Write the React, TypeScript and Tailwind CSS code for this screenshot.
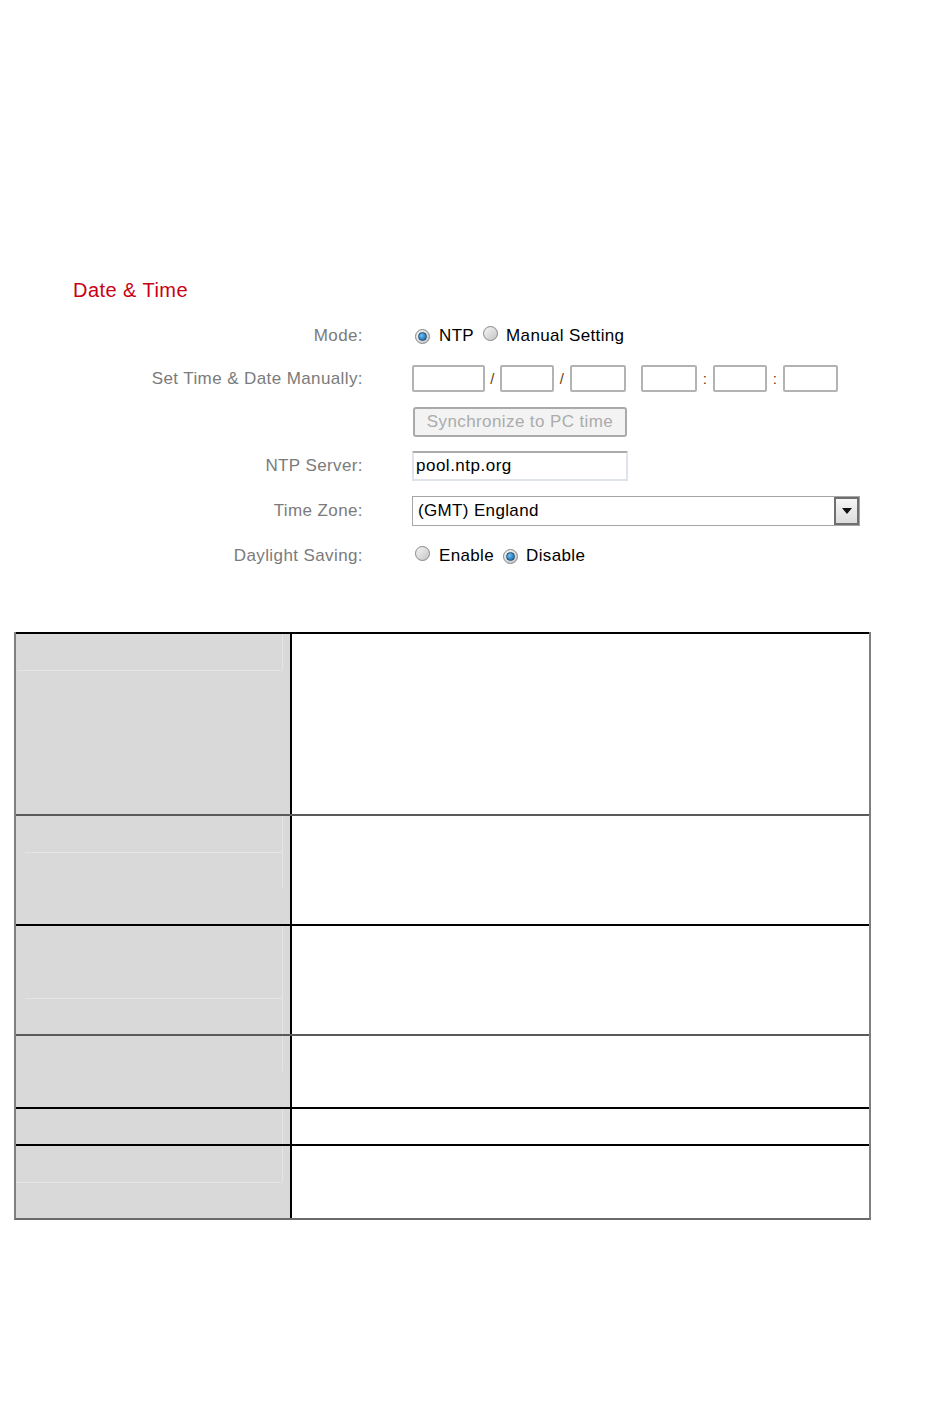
import React from 'react';

// ---------------------------------------------------------------------------
// Small form controls
// ---------------------------------------------------------------------------

function Radio({ checked }: { checked?: boolean }) {
  return (
    <span className="relative inline-flex h-[15px] w-[15px] shrink-0 items-center justify-center rounded-full border border-[#858585] bg-gradient-to-br from-[#f6f6f6] to-[#c4c4c4]">
      {checked && (
        <span className="h-[9px] w-[9px] rounded-full border border-[#1d4f7a] bg-[radial-gradient(circle_at_35%_35%,#6cc0f4,#0b5a9c)]" />
      )}
    </span>
  );
}

function Box({ w }: { w: string }) {
  return <span className={`${w} block h-[27px] rounded-[2px] border-2 border-[#b3b3b3] bg-white`} />;
}

function Sep({ ch, w }: { ch: string; w: string }) {
  return (
    <span className={`${w} block text-center text-[15px] leading-[27px] text-[#6b3a10]`}>{ch}</span>
  );
}

function Row({ label, h, children }: { label?: string; h: string; children: React.ReactNode }) {
  return (
    <div className={`flex items-center ${h}`}>
      <div className="w-[363px] shrink-0 text-right text-[17px] tracking-[0.4px] text-[#7b7b7b]">
        {label}
      </div>
      <div className="ml-[49px] flex items-center">{children}</div>
    </div>
  );
}

// ---------------------------------------------------------------------------
// Table rows with faint cell-edge lines in the grey column
// ---------------------------------------------------------------------------

interface TRow {
  h: string;
  top: string;
  vLine: string;
  hLine?: string;
}

const rows: TRow[] = [
  { h: 'h-[182px]', top: 'border-t-black', vLine: 'h-[36px]', hLine: 'top-[36px] left-[1px]' },
  { h: 'h-[110px]', top: 'border-t-[#5a5a5a]', vLine: 'h-[72px]', hLine: 'top-[36px] left-[9px]' },
  { h: 'h-[110px]', top: 'border-t-black', vLine: 'h-[108px]', hLine: 'top-[72px] left-[9px]' },
  { h: 'h-[73px]', top: 'border-t-[#5a5a5a]', vLine: 'h-[35px]' },
  { h: 'h-[37px]', top: 'border-t-black', vLine: 'h-[35px]' },
  { h: 'h-[74px]', top: 'border-t-black', vLine: 'h-[36px]', hLine: 'top-[36px] left-0' },
];

export default function App() {
  return (
    <div
      className="h-[1408px] w-[950px] bg-white pt-[278px]"
      style={{ fontFamily: '"Liberation Sans", Arial, sans-serif' }}
    >
      <div className="ml-[73px] text-[20px] leading-[24px] tracking-[0.45px] text-[#c80014]">
        Date &amp; Time
      </div>

      <div className="mt-[13px] tracking-[0.35px]">
        <Row label="Mode:" h="h-[42px]">
          <span className="ml-[3px]">
            <Radio checked />
          </span>
          <span className="ml-[9px] text-[17px] text-black">NTP</span>
          <span className="ml-[9px]">
            <Radio />
          </span>
          <span className="ml-[8px] text-[17px] text-black">Manual Setting</span>
        </Row>

        <Row label="Set Time & Date Manually:" h="h-[43px]">
          <Box w="w-[73px]" />
          <Sep ch="/" w="w-[15px]" />
          <Box w="w-[54px]" />
          <Sep ch="/" w="w-[16px]" />
          <Box w="w-[56px]" />
          <span className="block w-[15px]" />
          <Box w="w-[56px]" />
          <Sep ch=":" w="w-[16px]" />
          <Box w="w-[54px]" />
          <Sep ch=":" w="w-[16px]" />
          <Box w="w-[55px]" />
        </Row>

        <Row h="h-[44px]">
          <button
            type="button"
            className="ml-[1px] h-[30px] w-[214px] rounded-[3px] border-2 border-[#aaaaaa] bg-[#f3f3f3] text-[17px] tracking-[0.4px] text-[#ababab]"
          >
            Synchronize to PC time
          </button>
        </Row>

        <Row label="NTP Server:" h="h-[44px]">
          <div className="flex h-[30px] w-[216px] items-center border-2 border-[#dfe4ea] border-t-[#ababab] pl-[2px] text-[17px] tracking-[0.5px] text-black">
            pool.ntp.org
          </div>
        </Row>

        <Row label="Time Zone:" h="h-[45px]">
          <div className="flex h-[30px] w-[448px] items-center justify-between border border-[#a5a5a5] pl-[5px] text-[17px] text-black">
            <span>(GMT) England</span>
            <span className="flex h-[28px] w-[25px] items-center justify-center border-2 border-[#6f6f6f] bg-gradient-to-b from-[#f6f6f6] to-[#dcdcdc]">
              <svg width="10" height="6" viewBox="0 0 10 6">
                <polygon points="0,0 10,0 5,6" fill="#111" />
              </svg>
            </span>
          </div>
        </Row>

        <Row label="Daylight Saving:" h="h-[46px]">
          <span className="ml-[3px]">
            <Radio />
          </span>
          <span className="ml-[9px] text-[17px] text-black">Enable</span>
          <span className="ml-[9px]">
            <Radio checked />
          </span>
          <span className="ml-[8px] text-[17px] text-black">Disable</span>
        </Row>
      </div>

      {/* Description table (empty cells) */}
      <div className="ml-[14px] mt-[53px] w-[857px] border-x-2 border-b-2 border-x-[#7f7f7f] border-b-[#6a6a6a]">
        {rows.map((r, i) => (
          <div key={i} className={`flex border-t-2 ${r.top} ${r.h}`}>
            <div className="relative w-[276px] shrink-0 border-r-2 border-r-black bg-[#d9d9d9]">
              <span className={`absolute left-[266px] top-0 w-px bg-[#e5e5e5] ${r.vLine}`} />
              {r.hLine && <span className={`absolute right-[8px] h-px bg-[#e5e5e5] ${r.hLine}`} />}
            </div>
            <div className="flex-1 bg-white" />
          </div>
        ))}
      </div>
    </div>
  );
}
